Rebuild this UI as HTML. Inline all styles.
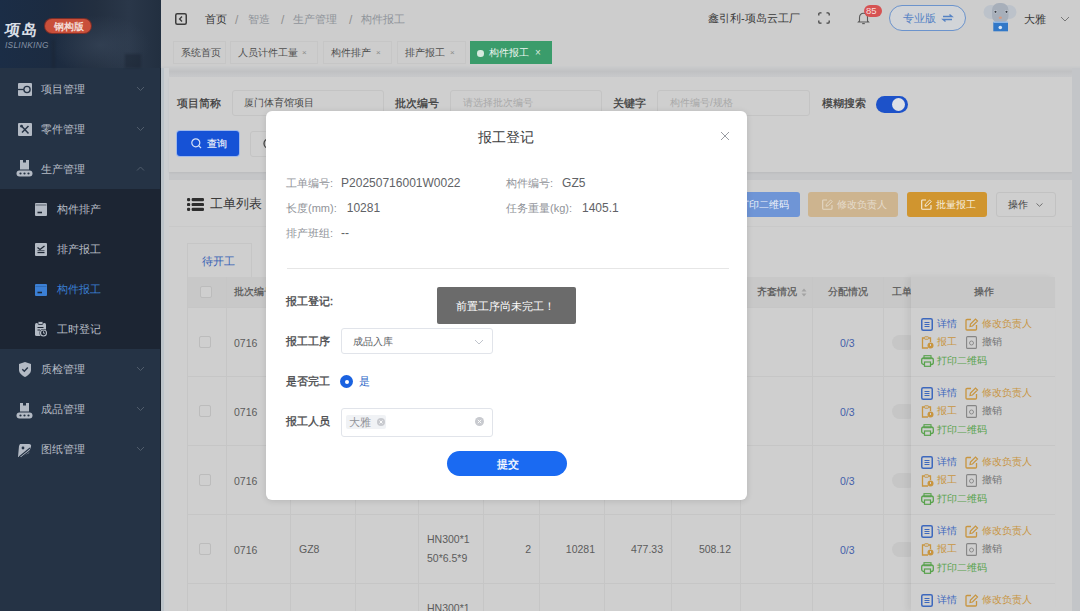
<!DOCTYPE html>
<html><head><meta charset="utf-8"><style>
*{box-sizing:border-box;margin:0;padding:0}
html,body{width:1080px;height:611px;overflow:hidden}
body{position:relative;background:#c5c6c8;font-family:"Liberation Sans",sans-serif;font-size:11px;color:#4a4a4a}
.a{position:absolute}
svg.a{overflow:visible}
.t{position:absolute;white-space:nowrap;line-height:14px}
#side{left:0;top:0;width:161px;height:611px;background:#253345;border-right:1px solid #1b2430}
#logo{left:0;top:0;width:161px;height:68px;background:radial-gradient(ellipse 50px 30px at 100px 45px,rgba(60,75,95,.55),rgba(60,75,95,0)),linear-gradient(90deg,#1b2d46 0%,#1c2b40 35%,#232f40 60%,#2a3749 80%,#222f40 100%)}
.mi{color:#b7bdc6;font-size:11px}
#sub{left:0;top:189px;width:160px;height:160px;background:#1c2533}
#nav{left:161px;top:0;width:919px;height:36px;background:#cdcdcd}
#tags{left:161px;top:36px;width:919px;height:30px;background:#cdcdcd}
.tag{position:absolute;top:41px;height:23px;border:1px solid #c6c6c6;background:#cdcdcd;color:#4f4f4f;font-size:10px;line-height:21px;padding-left:7px;white-space:nowrap}
.tag i{font-style:normal;color:#8a8a8a;font-size:8px;position:absolute;top:0}
.card{position:absolute;background:#cfcfcf}
.inp{position:absolute;height:26px;border:1px solid #c4c4c4;background:#cfcfcf;border-radius:3px}
.lbl{color:#3a3a3a;font-size:11px;-webkit-text-stroke:.25px #3a3a3a}
.ph{color:#a9a9a9;font-size:10px}
.vl{position:absolute;width:1px;background:#c6c6c6}
.hl{position:absolute;height:1px;background:#c6c6c6}
.cell{color:#5c5c5c;font-size:10.5px}
.hd{color:#555;font-size:10px;-webkit-text-stroke:.2px #555}
.cb{position:absolute;width:12px;height:12px;border:1px solid #bcbcbc;border-radius:2px;background:#cfcfcf}
.op{font-size:9.7px}
#modal{left:266px;top:111px;width:481px;height:389px;background:#fff;border-radius:6px;box-shadow:0 1px 6px rgba(0,0,0,.12)}
.ml{color:#909399;font-size:11px}
.mv{color:#606266;font-size:12px;margin-left:8px}
.fl{color:#4a4b4e;font-size:11px;-webkit-text-stroke:.35px #4a4b4e}
</style></head><body>
<div id="side" class="a"></div><div id="logo" class="a"></div>

<div class="t" style="left:5px;top:20px;font-size:15.5px;line-height:19px;color:#d9dee5;font-weight:bold;transform:skewX(-9deg);letter-spacing:.5px">项岛</div>
<div class="a" style="left:45px;top:19px;width:46px;height:14px;border-radius:7px;background:#c94f3a;box-shadow:0 0 0 1px #7a2e28"></div>
<div class="t" style="left:54px;top:19.5px;font-size:9.5px;line-height:13px;color:#f3dcd5;font-weight:bold">钢构版</div>
<div class="t" style="left:5px;top:40.5px;font-size:8.3px;line-height:9px;color:#8593a6;font-style:italic;letter-spacing:.3px">ISLINKING</div>
<svg class="a" style="left:0;top:0;filter:blur(1px)" width="161" height="68"><g fill="#1a2433" opacity=".5"><rect x="125" y="54" width="16" height="14"/><rect x="52" y="40" width="3" height="28"/></g></svg>
<div id="sub" class="a"></div>
<svg class="a" style="left:18px;top:83px" width="14" height="13"><rect x="0" y="0" width="14" height="13" rx="1" fill="#b3bac4"/><path d="M0 6.5H10.5" stroke="#253345" stroke-width="1.3"/><circle cx="9" cy="6.5" r="3.1" fill="#b3bac4" stroke="#253345" stroke-width="1.3"/></svg>
<svg class="a" style="left:18px;top:123px" width="14" height="13"><rect x="0" y="0" width="14" height="13" rx="1" fill="#b3bac4"/><path d="M3.5 3 L10.5 10.5 M10.5 3 L4 9.5" stroke="#253345" stroke-width="1.5"/><circle cx="3.5" cy="3.2" r="1.4" fill="#253345"/></svg>
<svg class="a" style="left:16px;top:160px" width="17" height="17"><path d="M4 0H7V2.5H10V0H13V9.5H4Z" fill="#b3bac4"/><rect x="0.5" y="10.5" width="16" height="6" rx="3" fill="#b3bac4"/><circle cx="4.5" cy="13.5" r="1.1" fill="#253345"/><circle cx="8.5" cy="13.5" r="1.1" fill="#253345"/><circle cx="12.5" cy="13.5" r="1.1" fill="#253345"/></svg>
<svg class="a" style="left:35px;top:203px" width="12" height="13"><rect x="0" y="0" width="12" height="13" rx="1" fill="#b3bac4"/><path d="M0.5 2H11.5" stroke="#1c2533" stroke-width=".6"/><path d="M2.5 9.5H7" stroke="#1c2533" stroke-width="1.6"/></svg>
<svg class="a" style="left:35px;top:243px" width="12" height="13"><rect x="0" y="0" width="12" height="13" rx="1" fill="#b3bac4"/><path d="M2.5 4.5L5 6.5L9.5 3" stroke="#1c2533" stroke-width="1.3" fill="none"/><path d="M2.5 9.5H9.5" stroke="#1c2533" stroke-width="1.3"/><path d="M2.5 7.5H9.5" stroke="#1c2533" stroke-width=".6"/></svg>
<svg class="a" style="left:35px;top:284px" width="12" height="12"><rect x="0" y="0" width="12" height="12" rx="1" fill="#3b7fd4"/><path d="M0.5 2.5H11.5" stroke="#2c5f9f" stroke-width=".6"/><path d="M2.5 8.5H7" stroke="#1c2533" stroke-width="1.6"/></svg>
<svg class="a" style="left:35px;top:321px" width="13" height="17"><rect x="0" y="2" width="11" height="13" rx="1.5" fill="#b3bac4"/><rect x="3" y="0.5" width="5" height="3" rx="1" fill="#b3bac4" stroke="#1c2533" stroke-width=".8"/><path d="M2.5 6.5H8.5M2.5 9H5" stroke="#1c2533" stroke-width="1"/><circle cx="8.5" cy="12" r="4" fill="#1c2533"/><circle cx="8.5" cy="12" r="3" fill="none" stroke="#b3bac4" stroke-width="1.1"/><path d="M8.5 10.3V12.2H10" stroke="#b3bac4" stroke-width=".9" fill="none"/></svg>
<svg class="a" style="left:19px;top:362px" width="12" height="15"><path d="M6 0L12 2V8C12 11 9 13.5 6 15C3 13.5 0 11 0 8V2Z" fill="#b3bac4"/><path d="M3.3 7.3L5.3 9.3L8.8 5.5" stroke="#253345" stroke-width="1.4" fill="none"/></svg>
<svg class="a" style="left:16px;top:403px" width="17" height="16"><path d="M4 0H7V2.5H10V0H13V8.5H4Z" fill="#b3bac4"/><rect x="0.5" y="9.5" width="16" height="6" rx="3" fill="#b3bac4"/><circle cx="4.5" cy="12.5" r="1.1" fill="#253345"/><circle cx="8.5" cy="12.5" r="1.1" fill="#253345"/><circle cx="12.5" cy="12.5" r="1.1" fill="#253345"/></svg>
<svg class="a" style="left:18px;top:444px" width="15" height="14"><path d="M2 0H11C12.5 0 13.5 1 13 2.5L11 9L3 13L0 13L1 2Z" fill="#b3bac4"/><path d="M1 13L12 4M4 13L13 6" stroke="#253345" stroke-width="1.1"/><circle cx="5" cy="4" r="1.4" fill="#253345"/></svg>
<div class="t mi" style="left:41px;top:82px">项目管理</div>
<svg class="a" style="left:136px;top:86px" width="9" height="6"><path d="M1 1 L4.5 4.5 L8 1" stroke="#505c6b" stroke-width="1" fill="none"/></svg>
<div class="t mi" style="left:41px;top:122px">零件管理</div>
<svg class="a" style="left:136px;top:126px" width="9" height="6"><path d="M1 1 L4.5 4.5 L8 1" stroke="#505c6b" stroke-width="1" fill="none"/></svg>
<div class="t mi" style="left:41px;top:162px">生产管理</div>
<svg class="a" style="left:136px;top:166px" width="9" height="6"><path d="M1 4.5 L4.5 1 L8 4.5" stroke="#505c6b" stroke-width="1" fill="none"/></svg>
<div class="t mi" style="left:41px;top:362px">质检管理</div>
<svg class="a" style="left:136px;top:366px" width="9" height="6"><path d="M1 1 L4.5 4.5 L8 1" stroke="#505c6b" stroke-width="1" fill="none"/></svg>
<div class="t mi" style="left:41px;top:402px">成品管理</div>
<svg class="a" style="left:136px;top:406px" width="9" height="6"><path d="M1 1 L4.5 4.5 L8 1" stroke="#505c6b" stroke-width="1" fill="none"/></svg>
<div class="t mi" style="left:41px;top:442px">图纸管理</div>
<svg class="a" style="left:136px;top:446px" width="9" height="6"><path d="M1 1 L4.5 4.5 L8 1" stroke="#505c6b" stroke-width="1" fill="none"/></svg>
<div class="t mi" style="left:57px;top:202px;color:#b7bdc6">构件排产</div>
<div class="t mi" style="left:57px;top:242px;color:#b7bdc6">排产报工</div>
<div class="t mi" style="left:57px;top:282px;color:#3b7fd4">构件报工</div>
<div class="t mi" style="left:57px;top:322px;color:#b7bdc6">工时登记</div>
<div id="nav" class="a"></div><div id="tags" class="a"></div><div class="a" style="left:161px;top:66px;width:919px;height:11px;background:linear-gradient(#cbcccd 0%,#c0c1c3 50%,#c8c9cb 100%)"></div>
<svg class="a" style="left:175px;top:13px" width="12" height="12"><rect x=".75" y=".75" width="10.5" height="10.5" rx="1.5" fill="none" stroke="#3c3c3c" stroke-width="1.5"/><path d="M7 3.5L4.6 6L7 8.5" stroke="#3c3c3c" stroke-width="1.4" fill="none"/></svg>
<div class="t" style="left:205px;top:12px;color:#333">首页</div>
<div class="t" style="left:235px;top:13px;color:#8f8f8f;font-size:12px">/</div>
<div class="t" style="left:281px;top:13px;color:#8f8f8f;font-size:12px">/</div>
<div class="t" style="left:349px;top:13px;color:#8f8f8f;font-size:12px">/</div>
<div class="t" style="left:248px;top:12px;color:#8f949a">智造</div>
<div class="t" style="left:293px;top:12px;color:#8f949a">生产管理</div>
<div class="t" style="left:361px;top:12px;color:#8f949a">构件报工</div>
<div class="t" style="left:708px;top:11px;color:#3a3a3a;font-size:11.2px">鑫引利-项岛云工厂</div>
<div class="tag" style="left:173px;width:53px">系统首页</div>
<div class="tag" style="left:230px;width:88px">人员计件工量<i style="left:71px">×</i></div>
<div class="tag" style="left:323px;width:69px">构件排产<i style="left:52px">×</i></div>
<div class="tag" style="left:397px;width:69px">排产报工<i style="left:52px">×</i></div>
<div class="a" style="left:470px;top:41px;width:82px;height:23px;background:#3a9c6b"></div>
<div class="a" style="left:477px;top:50px;width:6.5px;height:6.5px;border-radius:50%;background:#d6eadf"></div>
<div class="t" style="left:489px;top:46px;color:#eef5f0;font-size:10px">构件报工</div>
<div class="t" style="left:535px;top:46px;color:#d8eadf;font-size:10px">×</div>
<svg class="a" style="left:818px;top:12px" width="12" height="12"><path d="M0.8 3.5V2A1.2 1.2 0 0 1 2 0.8H3.5M8.5 0.8H10A1.2 1.2 0 0 1 11.2 2V3.5M11.2 8.5V10A1.2 1.2 0 0 1 10 11.2H8.5M3.5 11.2H2A1.2 1.2 0 0 1 0.8 10V8.5" stroke="#444" stroke-width="1.3" fill="none"/></svg>
<svg class="a" style="left:857px;top:11px" width="13" height="14"><path d="M2.5 10V6.5C2.5 4 4.2 2.3 6.5 2.3S10.5 4 10.5 6.5V10L11.5 11H1.5Z" stroke="#5a5a5a" stroke-width="1.1" fill="none"/><path d="M5.2 12.6H7.8" stroke="#5a5a5a" stroke-width="1.1"/></svg>
<div class="a" style="left:864px;top:5px;width:18px;height:12px;border-radius:6px;background:#d65252"></div>
<div class="t" style="left:866px;top:4px;font-size:9.5px;line-height:13px;color:#f6dede">85</div>
<div class="a" style="left:889px;top:5px;width:77px;height:26px;border-radius:13px;border:1px solid #6b93cc;background:#d1d4d8"></div>
<div class="t" style="left:903px;top:11px;color:#5582c4">专业版</div>
<svg class="a" style="left:943px;top:14px" width="10" height="8"><path d="M0 2.5H9L6.5 0.5M9 5.5H0L2.5 7.5" stroke="#5582c4" stroke-width="1.3" fill="none"/></svg>
<svg class="a" style="left:975px;top:0px" width="50" height="36"><ellipse cx="16" cy="12" rx="7.5" ry="7" fill="#bcc2ca"/><ellipse cx="34" cy="12" rx="7.5" ry="7" fill="#bcc2ca"/><rect x="17" y="3" width="16.5" height="20" rx="7" fill="#a7afba"/><circle cx="20.5" cy="11.8" r="1.8" fill="#c9ced6"/><circle cx="31.5" cy="11.8" r="1.8" fill="#c9ced6"/><circle cx="20.5" cy="11.8" r="1.1" fill="#3a3f48"/><circle cx="31.5" cy="11.8" r="1.1" fill="#3a3f48"/><ellipse cx="25.3" cy="17.7" rx="1.6" ry="1.3" fill="#d79a80"/><rect x="18.3" y="22" width="14.7" height="9.3" fill="#3178c8"/><rect x="18.3" y="21.5" width="14.7" height="1.5" fill="#8cb6e6"/><circle cx="25.3" cy="27.5" r="1.8" fill="#d8e6f6"/></svg>
<div class="t" style="left:1024px;top:12px;color:#3a3a3a">大雅</div>
<svg class="a" style="left:1060px;top:16px" width="10" height="6"><path d="M1 1 L5 5 L9 1" stroke="#777" fill="none"/></svg>
<div class="a" style="left:161px;top:68px;width:3px;height:543px;background:#bcc4ca"></div><div class="a" style="left:164px;top:68px;width:5px;height:543px;background:#cdcfd1"></div>
<div class="card" style="left:169px;top:77px;width:903px;height:95px;box-shadow:0 1px 2px rgba(0,0,0,.06)"></div>
<div class="t lbl" style="left:177px;top:96px">项目简称</div>
<div class="inp" style="left:232px;top:90px;width:152px"></div>
<div class="t" style="left:244px;top:96px;color:#4a4a4a;font-size:10.3px">厦门体育馆项目</div>
<div class="t lbl" style="left:395px;top:96px">批次编号</div>
<div class="inp" style="left:450px;top:90px;width:152px"></div>
<div class="t ph" style="left:463px;top:96px">请选择批次编号</div>
<div class="t lbl" style="left:613px;top:96px">关键字</div>
<div class="inp" style="left:657px;top:90px;width:153px"></div>
<div class="t ph" style="left:670px;top:96px">构件编号/规格</div>
<div class="t lbl" style="left:822px;top:96px">模糊搜索</div>
<div class="a" style="left:876px;top:96px;width:32px;height:17px;border-radius:9px;background:#1d52c9"></div>
<div class="a" style="left:892px;top:98px;width:13px;height:13px;border-radius:50%;background:#dde0e6"></div>
<div class="a" style="left:177px;top:131px;width:62px;height:25px;border-radius:3px;background:#1652d6;box-shadow:0 0 0 1px #9fb8ea"></div>
<svg class="a" style="left:191px;top:138px" width="11" height="11"><circle cx="4.8" cy="4.8" r="4" stroke="#d6e2f8" stroke-width="1.2" fill="none"/><path d="M7.6 7.6L10 10" stroke="#d6e2f8" stroke-width="1.2"/></svg>
<div class="t" style="left:207px;top:137px;color:#e8edf8;font-size:10px;-webkit-text-stroke:.2px #e8edf8">查询</div>
<div class="a" style="left:250px;top:131px;width:62px;height:26px;border-radius:3px;border:1px solid #c4c4c4"></div>
<svg class="a" style="left:263px;top:138px" width="12" height="12"><circle cx="5.5" cy="5.5" r="4.5" stroke="#444" stroke-width="1.3" fill="none"/></svg>
<div class="card" style="left:169px;top:180px;width:903px;height:431px"></div>
<div class="hl" style="left:169px;top:226px;width:903px;background:#c9c9c9"></div>
<div class="t" style="left:210px;top:196px;font-size:13px;line-height:16px;color:#3a3a3a">工单列表</div>
<svg class="a" style="left:187px;top:198px" width="17" height="13"><g fill="#2e2e2e"><rect x="0" y="0" width="3.2" height="3.2" rx="1.2"/><rect x="0" y="4.9" width="3.2" height="3.2" rx="1.2"/><rect x="0" y="9.8" width="3.2" height="3.2" rx="1.2"/><rect x="4.6" y="0" width="12.4" height="3.2" rx="1.2"/><rect x="4.6" y="4.9" width="12.4" height="3.2" rx="1.2"/><rect x="4.6" y="9.8" width="12.4" height="3.2" rx="1.2"/></g></svg>
<div class="a" style="left:728px;top:192px;width:72px;height:25px;border-radius:3px;background:#6f95d6"></div>
<div class="t" style="left:739px;top:198px;color:#eef2fa;font-size:10px">打印二维码</div>
<div class="a" style="left:808px;top:192px;width:90px;height:25px;border-radius:3px;background:#cdb48f"></div>
<svg class="a" style="left:822px;top:199px" width="11" height="11"><path d="M5 1H1.5A.8.8 0 0 0 .7 1.8V9.5A.8.8 0 0 0 1.5 10.3H9.2A.8.8 0 0 0 10 9.5V6" stroke="#e3d7c4" stroke-width="1.1" fill="none"/><path d="M4 7.2L4.4 5.2L8.6 1L10.2 2.6L6 6.8Z" stroke="#e3d7c4" stroke-width="1" fill="none"/></svg>
<div class="t" style="left:837px;top:198px;color:#e6dccd;font-size:10px">修改负责人</div>
<div class="a" style="left:907px;top:192px;width:80px;height:25px;border-radius:3px;background:#d0952f"></div>
<svg class="a" style="left:921px;top:199px" width="11" height="11"><path d="M5 1H1.5A.8.8 0 0 0 .7 1.8V9.5A.8.8 0 0 0 1.5 10.3H9.2A.8.8 0 0 0 10 9.5V6" stroke="#f6eedf" stroke-width="1.1" fill="none"/><path d="M4 7.2L4.4 5.2L8.6 1L10.2 2.6L6 6.8Z" stroke="#f6eedf" stroke-width="1" fill="none"/></svg>
<div class="t" style="left:936px;top:198px;color:#f6eedf;font-size:10px">批量报工</div>
<div class="a" style="left:996px;top:192px;width:60px;height:25px;border-radius:3px;border:1px solid #c2c2c2"></div>
<div class="t" style="left:1008px;top:198px;color:#444;font-size:10px">操作</div>
<svg class="a" style="left:1036px;top:203px" width="7" height="4"><path d="M.5 .5L3.5 3.3L6.5 .5" stroke="#666" stroke-width=".9" fill="none"/></svg>
<div class="a" style="left:187px;top:243px;width:65px;height:35px;border:1px solid #c6c6c6;border-bottom:none;background:#cfcfcf"></div>
<div class="t" style="left:202px;top:254px;color:#3a63b5;font-size:11px">待开工</div>
<div class="a" style="left:187px;top:277px;width:867px;height:30px;background:#c8c8c8"></div>
<div class="vl" style="left:187px;top:277px;height:334px"></div>
<div class="vl" style="left:226px;top:277px;height:334px"></div>
<div class="vl" style="left:290px;top:277px;height:334px"></div>
<div class="vl" style="left:355px;top:277px;height:334px"></div>
<div class="vl" style="left:418px;top:277px;height:334px"></div>
<div class="vl" style="left:483px;top:277px;height:334px"></div>
<div class="vl" style="left:539px;top:277px;height:334px"></div>
<div class="vl" style="left:604px;top:277px;height:334px"></div>
<div class="vl" style="left:671px;top:277px;height:334px"></div>
<div class="vl" style="left:740px;top:277px;height:334px"></div>
<div class="vl" style="left:812px;top:277px;height:334px"></div>
<div class="vl" style="left:883px;top:277px;height:334px"></div>
<div class="hl" style="left:187px;top:307px;width:867px"></div>
<div class="hl" style="left:187px;top:376px;width:867px"></div>
<div class="hl" style="left:187px;top:445px;width:867px"></div>
<div class="hl" style="left:187px;top:514px;width:867px"></div>
<div class="hl" style="left:187px;top:583px;width:867px"></div>
<div class="cb" style="left:200px;top:286px"></div>
<div class="t hd" style="left:234px;top:285px">批次编号</div>
<div class="t hd" style="left:757px;top:285px">齐套情况</div>
<svg class="a" style="left:801px;top:288px" width="6" height="9"><path d="M3 0.5L5.5 3.5H0.5Z M3 8.5L5.5 5.5H0.5Z" fill="#a3a3a3"/></svg>
<div class="t hd" style="left:828px;top:285px">分配情况</div>
<div class="t hd" style="left:892px;top:285px">工单</div>
<div class="cb" style="left:199px;top:336px"></div>
<div class="t cell" style="left:234px;top:336px">0716</div>
<div class="t cell" style="left:840px;top:336px;color:#4561aa">0/3</div>
<div class="a" style="left:892px;top:335px;width:24px;height:15px;border-radius:8px;background:#c6c6c6"></div>
<div class="cb" style="left:199px;top:405px"></div>
<div class="t cell" style="left:234px;top:405px">0716</div>
<div class="t cell" style="left:840px;top:405px;color:#4561aa">0/3</div>
<div class="a" style="left:892px;top:404px;width:24px;height:15px;border-radius:8px;background:#c6c6c6"></div>
<div class="cb" style="left:199px;top:474px"></div>
<div class="t cell" style="left:234px;top:474px">0716</div>
<div class="t cell" style="left:840px;top:474px;color:#4561aa">0/3</div>
<div class="a" style="left:892px;top:473px;width:24px;height:15px;border-radius:8px;background:#c6c6c6"></div>
<div class="cb" style="left:199px;top:543px"></div>
<div class="t cell" style="left:234px;top:543px">0716</div>
<div class="t cell" style="left:840px;top:543px;color:#4561aa">0/3</div>
<div class="a" style="left:892px;top:542px;width:24px;height:15px;border-radius:8px;background:#c6c6c6"></div>
<div class="t cell" style="left:299px;top:542px">GZ8</div>
<div class="t cell" style="left:427px;top:532px">HN300*1</div>
<div class="t cell" style="left:427px;top:551px">50*6.5*9</div>
<div class="t cell" style="right:549px;top:542px">2</div>
<div class="t cell" style="right:485px;top:542px">10281</div>
<div class="t cell" style="right:417px;top:542px">477.33</div>
<div class="t cell" style="right:349px;top:542px">508.12</div>
<div class="t cell" style="left:427px;top:601px">HN300*1</div>
<div class="a" style="left:911px;top:277px;width:144px;height:334px;background:#cfcfcf;box-shadow:-4px 0 6px rgba(0,0,0,.06)"></div>
<div class="a" style="left:911px;top:277px;width:144px;height:30px;background:#c8c8c8"></div>
<div class="hl" style="left:911px;top:307px;width:144px"></div>
<div class="hl" style="left:911px;top:376px;width:144px"></div>
<div class="hl" style="left:911px;top:445px;width:144px"></div>
<div class="hl" style="left:911px;top:514px;width:144px"></div>
<div class="hl" style="left:911px;top:583px;width:144px"></div>
<div class="t hd" style="left:974px;top:285px">操作</div>
<svg class="a" style="left:921px;top:318px" width="12" height="13"><rect x=".75" y=".75" width="10.5" height="11.5" rx="1.5" stroke="#3d68bd" stroke-width="1.5" fill="none"/><path d="M3.5 4.5H8.5M3.5 6.5H8.5M3.5 8.5H8.5" stroke="#3d68bd" stroke-width="1"/></svg>
<div class="t op" style="left:937px;top:317px;color:#3d68bd">详情</div>
<svg class="a" style="left:965px;top:318px" width="13" height="13"><path d="M6 1.5H2A1 1 0 0 0 1 2.5V11A1 1 0 0 0 2 12H10.5A1 1 0 0 0 11.5 11V7" stroke="#c8953f" stroke-width="1.3" fill="none"/><path d="M5 8.5L5.5 6L10.5 1L12.5 3L7.5 8Z" stroke="#c8953f" stroke-width="1.2" fill="none"/></svg>
<div class="t op" style="left:982px;top:317px;color:#c8953f">修改负责人</div>
<svg class="a" style="left:921px;top:336px" width="13" height="13"><path d="M3 2H1.5V12H7" stroke="#c8953f" stroke-width="1.3" fill="none"/><path d="M8 2H9.5V6" stroke="#c8953f" stroke-width="1.3" fill="none"/><rect x="3.5" y=".8" width="4" height="2.4" rx=".6" stroke="#c8953f" stroke-width="1" fill="none"/><circle cx="9.5" cy="9.5" r="3" fill="#c8953f"/><path d="M9.5 8V10" stroke="#cfcfcf" stroke-width="1"/></svg>
<div class="t op" style="left:937px;top:335px;color:#c8953f">报工</div>
<svg class="a" style="left:966px;top:336px" width="11" height="13"><rect x=".6" y=".6" width="9.8" height="11.8" rx="1" stroke="#858585" stroke-width="1.1" fill="none"/><circle cx="5.5" cy="7" r="2" stroke="#858585" stroke-width=".9" fill="none"/></svg>
<div class="t op" style="left:982px;top:335px;color:#757575">撤销</div>
<svg class="a" style="left:921px;top:355px" width="13" height="12"><rect x=".7" y="3" width="11.6" height="6.5" rx="2" stroke="#58a24c" stroke-width="1.3" fill="none"/><rect x="3" y=".7" width="7" height="3" stroke="#58a24c" stroke-width="1.1" fill="none"/><rect x="3.5" y="7" width="6" height="4.3" stroke="#58a24c" stroke-width="1.2" fill="#cfcfcf"/></svg>
<div class="t op" style="left:937px;top:354px;color:#58a24c">打印二维码</div>
<svg class="a" style="left:921px;top:387px" width="12" height="13"><rect x=".75" y=".75" width="10.5" height="11.5" rx="1.5" stroke="#3d68bd" stroke-width="1.5" fill="none"/><path d="M3.5 4.5H8.5M3.5 6.5H8.5M3.5 8.5H8.5" stroke="#3d68bd" stroke-width="1"/></svg>
<div class="t op" style="left:937px;top:386px;color:#3d68bd">详情</div>
<svg class="a" style="left:965px;top:387px" width="13" height="13"><path d="M6 1.5H2A1 1 0 0 0 1 2.5V11A1 1 0 0 0 2 12H10.5A1 1 0 0 0 11.5 11V7" stroke="#c8953f" stroke-width="1.3" fill="none"/><path d="M5 8.5L5.5 6L10.5 1L12.5 3L7.5 8Z" stroke="#c8953f" stroke-width="1.2" fill="none"/></svg>
<div class="t op" style="left:982px;top:386px;color:#c8953f">修改负责人</div>
<svg class="a" style="left:921px;top:405px" width="13" height="13"><path d="M3 2H1.5V12H7" stroke="#c8953f" stroke-width="1.3" fill="none"/><path d="M8 2H9.5V6" stroke="#c8953f" stroke-width="1.3" fill="none"/><rect x="3.5" y=".8" width="4" height="2.4" rx=".6" stroke="#c8953f" stroke-width="1" fill="none"/><circle cx="9.5" cy="9.5" r="3" fill="#c8953f"/><path d="M9.5 8V10" stroke="#cfcfcf" stroke-width="1"/></svg>
<div class="t op" style="left:937px;top:404px;color:#c8953f">报工</div>
<svg class="a" style="left:966px;top:405px" width="11" height="13"><rect x=".6" y=".6" width="9.8" height="11.8" rx="1" stroke="#858585" stroke-width="1.1" fill="none"/><circle cx="5.5" cy="7" r="2" stroke="#858585" stroke-width=".9" fill="none"/></svg>
<div class="t op" style="left:982px;top:404px;color:#757575">撤销</div>
<svg class="a" style="left:921px;top:424px" width="13" height="12"><rect x=".7" y="3" width="11.6" height="6.5" rx="2" stroke="#58a24c" stroke-width="1.3" fill="none"/><rect x="3" y=".7" width="7" height="3" stroke="#58a24c" stroke-width="1.1" fill="none"/><rect x="3.5" y="7" width="6" height="4.3" stroke="#58a24c" stroke-width="1.2" fill="#cfcfcf"/></svg>
<div class="t op" style="left:937px;top:423px;color:#58a24c">打印二维码</div>
<svg class="a" style="left:921px;top:456px" width="12" height="13"><rect x=".75" y=".75" width="10.5" height="11.5" rx="1.5" stroke="#3d68bd" stroke-width="1.5" fill="none"/><path d="M3.5 4.5H8.5M3.5 6.5H8.5M3.5 8.5H8.5" stroke="#3d68bd" stroke-width="1"/></svg>
<div class="t op" style="left:937px;top:455px;color:#3d68bd">详情</div>
<svg class="a" style="left:965px;top:456px" width="13" height="13"><path d="M6 1.5H2A1 1 0 0 0 1 2.5V11A1 1 0 0 0 2 12H10.5A1 1 0 0 0 11.5 11V7" stroke="#c8953f" stroke-width="1.3" fill="none"/><path d="M5 8.5L5.5 6L10.5 1L12.5 3L7.5 8Z" stroke="#c8953f" stroke-width="1.2" fill="none"/></svg>
<div class="t op" style="left:982px;top:455px;color:#c8953f">修改负责人</div>
<svg class="a" style="left:921px;top:474px" width="13" height="13"><path d="M3 2H1.5V12H7" stroke="#c8953f" stroke-width="1.3" fill="none"/><path d="M8 2H9.5V6" stroke="#c8953f" stroke-width="1.3" fill="none"/><rect x="3.5" y=".8" width="4" height="2.4" rx=".6" stroke="#c8953f" stroke-width="1" fill="none"/><circle cx="9.5" cy="9.5" r="3" fill="#c8953f"/><path d="M9.5 8V10" stroke="#cfcfcf" stroke-width="1"/></svg>
<div class="t op" style="left:937px;top:473px;color:#c8953f">报工</div>
<svg class="a" style="left:966px;top:474px" width="11" height="13"><rect x=".6" y=".6" width="9.8" height="11.8" rx="1" stroke="#858585" stroke-width="1.1" fill="none"/><circle cx="5.5" cy="7" r="2" stroke="#858585" stroke-width=".9" fill="none"/></svg>
<div class="t op" style="left:982px;top:473px;color:#757575">撤销</div>
<svg class="a" style="left:921px;top:493px" width="13" height="12"><rect x=".7" y="3" width="11.6" height="6.5" rx="2" stroke="#58a24c" stroke-width="1.3" fill="none"/><rect x="3" y=".7" width="7" height="3" stroke="#58a24c" stroke-width="1.1" fill="none"/><rect x="3.5" y="7" width="6" height="4.3" stroke="#58a24c" stroke-width="1.2" fill="#cfcfcf"/></svg>
<div class="t op" style="left:937px;top:492px;color:#58a24c">打印二维码</div>
<svg class="a" style="left:921px;top:525px" width="12" height="13"><rect x=".75" y=".75" width="10.5" height="11.5" rx="1.5" stroke="#3d68bd" stroke-width="1.5" fill="none"/><path d="M3.5 4.5H8.5M3.5 6.5H8.5M3.5 8.5H8.5" stroke="#3d68bd" stroke-width="1"/></svg>
<div class="t op" style="left:937px;top:524px;color:#3d68bd">详情</div>
<svg class="a" style="left:965px;top:525px" width="13" height="13"><path d="M6 1.5H2A1 1 0 0 0 1 2.5V11A1 1 0 0 0 2 12H10.5A1 1 0 0 0 11.5 11V7" stroke="#c8953f" stroke-width="1.3" fill="none"/><path d="M5 8.5L5.5 6L10.5 1L12.5 3L7.5 8Z" stroke="#c8953f" stroke-width="1.2" fill="none"/></svg>
<div class="t op" style="left:982px;top:524px;color:#c8953f">修改负责人</div>
<svg class="a" style="left:921px;top:543px" width="13" height="13"><path d="M3 2H1.5V12H7" stroke="#c8953f" stroke-width="1.3" fill="none"/><path d="M8 2H9.5V6" stroke="#c8953f" stroke-width="1.3" fill="none"/><rect x="3.5" y=".8" width="4" height="2.4" rx=".6" stroke="#c8953f" stroke-width="1" fill="none"/><circle cx="9.5" cy="9.5" r="3" fill="#c8953f"/><path d="M9.5 8V10" stroke="#cfcfcf" stroke-width="1"/></svg>
<div class="t op" style="left:937px;top:542px;color:#c8953f">报工</div>
<svg class="a" style="left:966px;top:543px" width="11" height="13"><rect x=".6" y=".6" width="9.8" height="11.8" rx="1" stroke="#858585" stroke-width="1.1" fill="none"/><circle cx="5.5" cy="7" r="2" stroke="#858585" stroke-width=".9" fill="none"/></svg>
<div class="t op" style="left:982px;top:542px;color:#757575">撤销</div>
<svg class="a" style="left:921px;top:562px" width="13" height="12"><rect x=".7" y="3" width="11.6" height="6.5" rx="2" stroke="#58a24c" stroke-width="1.3" fill="none"/><rect x="3" y=".7" width="7" height="3" stroke="#58a24c" stroke-width="1.1" fill="none"/><rect x="3.5" y="7" width="6" height="4.3" stroke="#58a24c" stroke-width="1.2" fill="#cfcfcf"/></svg>
<div class="t op" style="left:937px;top:561px;color:#58a24c">打印二维码</div>
<svg class="a" style="left:921px;top:594px" width="12" height="13"><rect x=".75" y=".75" width="10.5" height="11.5" rx="1.5" stroke="#3d68bd" stroke-width="1.5" fill="none"/><path d="M3.5 4.5H8.5M3.5 6.5H8.5M3.5 8.5H8.5" stroke="#3d68bd" stroke-width="1"/></svg>
<div class="t op" style="left:937px;top:593px;color:#3d68bd">详情</div>
<svg class="a" style="left:965px;top:594px" width="13" height="13"><path d="M6 1.5H2A1 1 0 0 0 1 2.5V11A1 1 0 0 0 2 12H10.5A1 1 0 0 0 11.5 11V7" stroke="#c8953f" stroke-width="1.3" fill="none"/><path d="M5 8.5L5.5 6L10.5 1L12.5 3L7.5 8Z" stroke="#c8953f" stroke-width="1.2" fill="none"/></svg>
<div class="t op" style="left:982px;top:593px;color:#c8953f">修改负责人</div>
<div class="a" style="left:1072px;top:68px;width:8px;height:543px;background:#c3c5c8"></div>
<div id="modal" class="a"></div>
<div class="t" style="left:478px;top:129px;font-size:14px;line-height:17px;color:#3c3d40">报工登记</div>
<svg class="a" style="left:720px;top:131px" width="10" height="10"><path d="M1 1L9 9M9 1L1 9" stroke="#9a9da3" stroke-width="1"/></svg>
<div class="t ml" style="left:286px;top:176px">工单编号:<span class="mv">P20250716001W0022</span></div>
<div class="t ml" style="left:286px;top:201px">长度(mm):<span class="mv" style="margin-left:10px">10281</span></div>
<div class="t ml" style="left:286px;top:226px">排产班组:<span class="mv">--</span></div>
<div class="t ml" style="left:506px;top:176px">构件编号:<span class="mv" style="margin-left:9px">GZ5</span></div>
<div class="t ml" style="left:506px;top:201px">任务重量(kg):<span class="mv" style="margin-left:10px">1405.1</span></div>
<div class="a" style="left:287px;top:268px;width:442px;height:1px;background:#e6e6e6"></div>
<div class="t fl" style="left:286px;top:294px">报工登记:</div>
<div class="a" style="left:437px;top:287px;width:139px;height:37px;background:#6b6b6b;border-radius:2px"></div>
<div class="t" style="left:456px;top:299px;color:#fff;font-size:11px">前置工序尚未完工！</div>
<div class="t fl" style="left:286px;top:334px">报工工序</div>
<div class="a" style="left:341px;top:328px;width:152px;height:26px;border:1px solid #e1e4ea;border-radius:3px"></div>
<div class="t" style="left:353px;top:335px;color:#606266;font-size:10px">成品入库</div>
<svg class="a" style="left:474px;top:339px" width="10" height="6"><path d="M1 1L5 5L9 1" stroke="#c0c4cc" fill="none"/></svg>
<div class="t fl" style="left:286px;top:374px">是否完工</div>
<div class="a" style="left:340px;top:375px;width:13px;height:13px;border-radius:50%;background:#1a62e0"></div>
<div class="a" style="left:344.5px;top:379.5px;width:4px;height:4px;border-radius:50%;background:#fff"></div>
<div class="t" style="left:359px;top:374px;color:#2f68c8">是</div>
<div class="t fl" style="left:286px;top:414px">报工人员</div>
<div class="a" style="left:341px;top:408px;width:152px;height:29px;border:1px solid #e1e4ea;border-radius:3px"></div>
<div class="a" style="left:346px;top:415px;width:40px;height:14px;background:#f0f2f5;border-radius:2px"></div>
<div class="t" style="left:349px;top:415px;color:#909399;font-size:11px">大雅</div>
<svg class="a" style="left:377px;top:418px" width="8" height="8"><circle cx="4" cy="4" r="4" fill="#c8cacf"/><path d="M2.5 2.5L5.5 5.5M5.5 2.5L2.5 5.5" stroke="#fff" stroke-width=".9"/></svg>
<svg class="a" style="left:475px;top:417px" width="9" height="9"><circle cx="4.5" cy="4.5" r="4.5" fill="#c8cacf"/><path d="M2.8 2.8L6.2 6.2M6.2 2.8L2.8 6.2" stroke="#fff" stroke-width=".9"/></svg>
<div class="a" style="left:447px;top:451px;width:120px;height:25px;border-radius:13px;background:#1a6af2"></div>
<div class="t" style="left:497px;top:457px;color:#fff;font-size:10.5px;-webkit-text-stroke:.3px #fff">提交</div>
</body></html>
